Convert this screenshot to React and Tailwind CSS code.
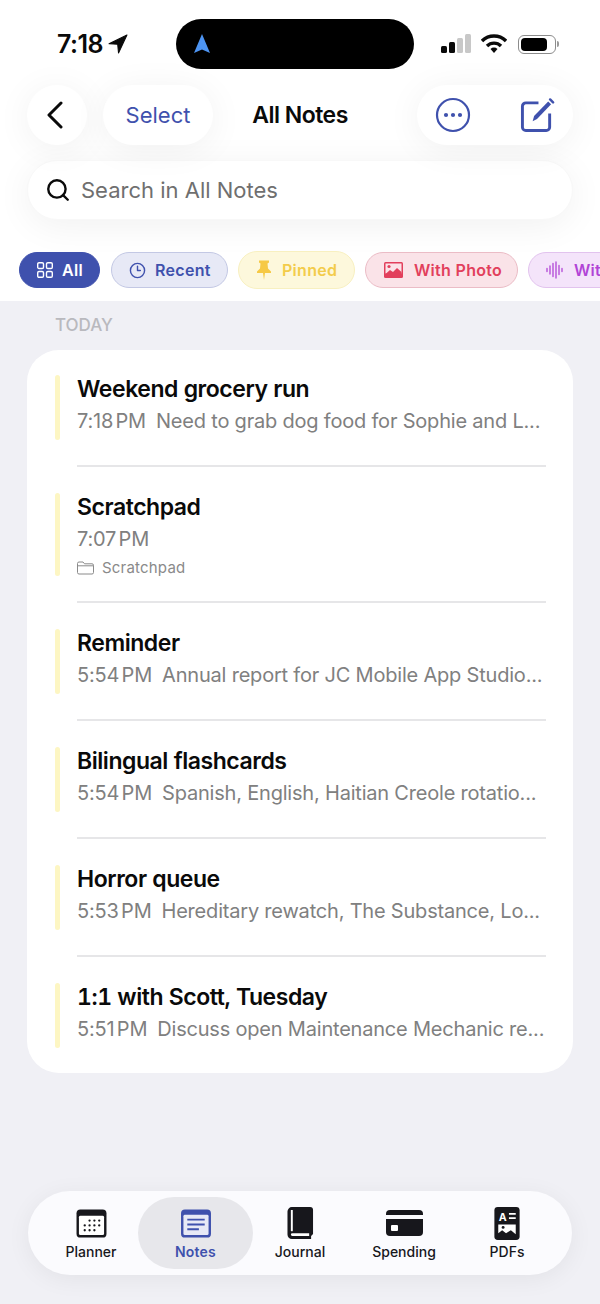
// App.jsx
import React from 'react';
import { Search, Clock3 } from 'lucide-react';

const INDIGO = '#3f51ad';

const notes = [
  { title: 'Weekend grocery run', time: '7:18 PM', text: 'Need to grab dog food for Sophie and L...' },
  { title: 'Scratchpad', time: '7:07 PM', folder: 'Scratchpad' },
  { title: 'Reminder', time: '5:54 PM', text: 'Annual report for JC Mobile App Studio...' },
  { title: 'Bilingual flashcards', time: '5:54 PM', text: 'Spanish, English, Haitian Creole rotatio...' },
  { title: 'Horror queue', time: '5:53 PM', text: 'Hereditary rewatch, The Substance, Lo...' },
  { title: '1:1 with Scott, Tuesday', time: '5:51 PM', text: 'Discuss open Maintenance Mechanic re...' },
];

const StatusBar = () => (
  <div className="flex items-center h-[50px] mt-[19px] pl-[57px] pr-[41px]">
    <div className="flex items-center w-[119px]">
      <span className="text-[25px] font-semibold text-[#0a0a0a] tracking-[-0.5px] leading-none">7:18</span>
      <svg width="20" height="20" viewBox="0 0 19 19" className="ml-[5px]">
        <path d="M18 1 L1 9.2 L9.2 9.8 L10 18 Z" fill="#0a0a0a" stroke="#0a0a0a" strokeLinejoin="round" />
      </svg>
    </div>
    <div className="w-[238px] h-[50px] bg-black rounded-[25px] flex items-center pl-[16px]">
      <svg width="20" height="22" viewBox="0 0 20 22">
        <path d="M10 1 L18 20 L10 16.5 L2 20 Z" fill="#4d94f2" strokeLinejoin="round" />
      </svg>
    </div>
    <div className="flex items-center flex-1 justify-end">
      <svg width="30" height="20" viewBox="0 0 30 20">
        <rect x="0" y="12" width="6" height="7" rx="1.5" fill="#0a0a0a" />
        <rect x="8" y="8" width="6" height="11" rx="1.5" fill="#0a0a0a" />
        <rect x="16" y="4" width="6" height="15" rx="1.5" fill="#c8c8c8" />
        <rect x="24" y="0" width="6" height="19" rx="1.5" fill="#c8c8c8" />
      </svg>
      <svg width="26" height="20" viewBox="0 0 26 20" className="ml-[10px]">
        <path d="M1 7 A17 17 0 0 1 25 7" fill="none" stroke="#0a0a0a" strokeWidth="3.4" />
        <path d="M6 12 A10 10 0 0 1 20 12" fill="none" stroke="#0a0a0a" strokeWidth="3.4" />
        <path d="M9.5 15 A5 5 0 0 1 16.5 15 L13 19 Z" fill="#0a0a0a" />
      </svg>
      <div className="flex items-center ml-[11px]">
        <div className="w-[38px] h-[19px] rounded-[6px] border border-[#8c8c8c] p-[2px]">
          <div className="w-[26px] h-full bg-black rounded-[4px]" />
        </div>
        <div className="w-[2px] h-[6px] bg-[#9a9a9a] rounded-r-sm ml-[1px]" />
      </div>
    </div>
  </div>
);

const NavBar = () => (
  <div className="flex items-center mt-[16px] mx-[27px] h-[60px]">
    <button className="w-[60px] h-[60px] rounded-full bg-white shadow-[0_4px_36px_rgba(0,0,0,0.06)] flex items-center justify-center">
      <svg width="18" height="28" viewBox="0 0 18 28" fill="none" stroke="#0a0a0a" strokeWidth="3" strokeLinecap="round" strokeLinejoin="round" className="mr-[4px]">
        <path d="M15 2 L3 14 L15 26" />
      </svg>
    </button>
    <button className="ml-[16px] w-[110px] h-[60px] rounded-full bg-white shadow-[0_4px_36px_rgba(0,0,0,0.06)] text-[22px] text-[#3f51ad]">
      Select
    </button>
    <div className="flex-1 text-center text-[23px] font-semibold text-[#0a0a0a] tracking-[-0.5px] pr-[30px]">All Notes</div>
    <div className="w-[156px] h-[60px] rounded-full bg-white shadow-[0_4px_36px_rgba(0,0,0,0.06)] flex items-center pl-[18px] gap-[49px]">
      <svg width="36" height="36" viewBox="0 0 36 36">
        <circle cx="18" cy="18" r="16" fill="none" stroke={INDIGO} strokeWidth="2.2" />
        <circle cx="11" cy="18" r="2.1" fill={INDIGO} />
        <circle cx="18" cy="18" r="2.1" fill={INDIGO} />
        <circle cx="25" cy="18" r="2.1" fill={INDIGO} />
      </svg>
      <svg width="35" height="35" viewBox="0 0 36 36">
        <path d="M19 5 H6 A3.5 3.5 0 0 0 2.5 8.5 V30 A3.5 3.5 0 0 0 6 33.5 H27 A3.5 3.5 0 0 0 30.5 30 V16" fill="none" stroke={INDIGO} strokeWidth="3" />
        <path d="M13 24 L14.5 18.5 L29 3.5 L32 6.5 L17.5 21.5 Z" fill={INDIGO} />
        <path d="M31 1.5 L34 4.5" stroke={INDIGO} strokeWidth="2.5" strokeLinecap="round" />
      </svg>
    </div>
  </div>
);

const SearchBar = () => (
  <div className="mt-[15px] mx-[27px] h-[60px] rounded-[30px] bg-white border border-[#f8f8f8] shadow-[0_6px_36px_rgba(0,0,0,0.06)] flex items-center pl-[17px]">
    <Search size={26} strokeWidth={2.2} color="#0a0a0a" />
    <span className="ml-[10px] text-[22px] text-[#6f6f6f]">Search in All Notes</span>
  </div>
);

const GridIcon = () => (
  <svg width="16" height="16" viewBox="0 0 16 16" fill="none" stroke="white" strokeWidth="1.4">
    <rect x="0.7" y="0.7" width="5.8" height="5.8" rx="1.3" />
    <rect x="9.5" y="0.7" width="5.8" height="5.8" rx="1.3" />
    <rect x="0.7" y="9.5" width="5.8" height="5.8" rx="1.3" />
    <rect x="9.5" y="9.5" width="5.8" height="5.8" rx="1.3" />
  </svg>
);

const PinIcon = () => (
  <svg width="14" height="20" viewBox="0 0 14 20" fill="#f6c945">
    <path d="M2 0.5 H12 V2.5 L10.5 3.5 L11 8.5 L14 11.5 V13 H8 L7 20 L6 13 H0 V11.5 L3 8.5 L3.5 3.5 L2 2.5 Z" />
  </svg>
);

const PhotoIcon = () => (
  <svg width="19" height="16" viewBox="0 0 19 16">
    <rect x="0" y="0" width="19" height="16" rx="1.5" fill="#e23f5c" />
    <rect x="1.5" y="1.5" width="16" height="10" fill="#fbe3e8" />
    <circle cx="5" cy="4.5" r="1.6" fill="#e23f5c" />
    <path d="M1.5 12 L6 8 L9 10 L13 6 L17.5 10 V13 H1.5 Z" fill="#e23f5c" />
  </svg>
);

const WaveIcon = () => (
  <svg width="17" height="18" viewBox="0 0 17 18" stroke="#b144d6" strokeWidth="1.3" strokeLinecap="round">
    <path d="M1 7.5 V10.5 M4 5 V13 M7 2.5 V15.5 M10 1 V17 M13 4.5 V13.5 M16 7.5 V10.5" />
  </svg>
);

const Chip = ({ icon, label, className, textClass, gap = 'gap-[9px]' }) => (
  <div className={`shrink-0 rounded-full border flex items-center ${gap} text-[16px] font-semibold tracking-[0.3px] ${className} ${textClass}`}>
    {icon}
    <span>{label}</span>
  </div>
);

const FilterChips = () => (
  <div className="mt-[31px] pl-[19px] flex items-center gap-[10px] overflow-hidden h-[38px]">
    <Chip
      icon={<GridIcon />}
      label="All"
      className="w-[81px] mr-[1px] h-[36px] pl-[17px] bg-[#3f51ad] border-[#3f51ad]"
      textClass="text-white"
    />
    <Chip
      icon={<Clock3 size={17} strokeWidth={2} />}
      label="Recent"
      className="w-[117px] h-[36px] pl-[17px] bg-[#e7e9f6] border-[#c3c8e4]"
      textClass="text-[#3f51ad]"
    />
    <Chip
      icon={<PinIcon />}
      label="Pinned"
      className="w-[117px] h-[38px] pl-[18px] bg-[#fdf8dc] border-[#f8f0c0]"
      textClass="text-[#f3cc4b]"
      gap="gap-[11px]"
    />
    <Chip
      icon={<PhotoIcon />}
      label="With Photo"
      className="w-[153px] h-[36px] pl-[18px] bg-[#fae3e8] border-[#ebbcc6]"
      textClass="text-[#e23f5c]"
      gap="gap-[11px]"
    />
    <Chip
      icon={<WaveIcon />}
      label="With Audio"
      className="w-[150px] h-[36px] pl-[17px] bg-[#f4e4fa] border-[#e2c3ee]"
      textClass="text-[#b144d6]"
      gap="gap-[11px]"
    />
  </div>
);

const FolderIcon = () => (
  <svg width="17" height="14" viewBox="0 0 17 14" fill="none" stroke="#8a8a8a" strokeWidth="1">
    <path d="M0.5 2.5 A1.5 1.5 0 0 1 2 1 H6 L7.5 2.8 H15 A1.5 1.5 0 0 1 16.5 4.3 V11.5 A1.5 1.5 0 0 1 15 13 H2 A1.5 1.5 0 0 1 0.5 11.5 Z" />
    <path d="M0.5 4.8 H16.5" />
  </svg>
);

const NoteRow = ({ note, isFirst, isLast }) => (
  <div className={`pl-[28px] pr-[27px] ${isFirst ? 'pt-[25px]' : 'pt-[26px]'} ${isLast ? 'pb-[25px]' : ''}`}>
    <div className="flex">
      <div className="w-[5px] bg-[#fdf6c3] rounded-full" />
      <div className={`ml-[17px] flex-1 min-w-0 ${note.folder ? 'mb-[-3px]' : 'pb-[4px]'}`}>
        <div className="text-[23px] leading-[29px] font-semibold text-[#0a0a0a] tracking-[-0.45px] tabular-nums">{note.title}</div>
        <div className="mt-[2px] text-[20px] leading-[30px] text-[#808080] whitespace-nowrap overflow-hidden">
          <span className="tracking-[-0.2px] [word-spacing:-3px]">{note.time}</span>
          {note.text && <span className="ml-[10px] tracking-[-0.2px]">{note.text}</span>}
        </div>
        {note.folder && (
          <div className="mt-[3px] flex items-center gap-[8px] h-[22px] text-[15px] text-[#8a8a8a]">
            <FolderIcon />
            <span className="tracking-[0.2px]">{note.folder}</span>
          </div>
        )}
      </div>
    </div>
    {!isLast && <div className="ml-[22px] mt-[25px] h-[2px] bg-[#e6e6e8]" />}
  </div>
);

const PlannerIcon = () => (
  <svg width="31" height="29" viewBox="0 0 32 30">
    <rect x="0.5" y="0.5" width="31" height="29" rx="4" fill="#17171c" />
    <rect x="3" y="7" width="26" height="20" rx="1.5" fill="white" />
    <g fill="#17171c">
      <circle cx="14" cy="12" r="1.2" /><circle cx="19" cy="12" r="1.2" /><circle cx="24" cy="12" r="1.2" />
      <circle cx="9" cy="17" r="1.2" /><circle cx="14" cy="17" r="1.2" /><circle cx="19" cy="17" r="1.2" /><circle cx="24" cy="17" r="1.2" />
      <circle cx="9" cy="22" r="1.2" /><circle cx="14" cy="22" r="1.2" /><circle cx="19" cy="22" r="1.2" />
    </g>
  </svg>
);

const NotesIcon = () => (
  <svg width="32" height="29" viewBox="0 0 32 30">
    <rect x="0.5" y="0.5" width="31" height="29" rx="4" fill={INDIGO} />
    <rect x="3" y="6" width="26" height="21" rx="1.5" fill="#e7e9f6" />
    <path d="M7 11 H25 M7 16 H25 M7 21 H19" stroke={INDIGO} strokeWidth="2" />
  </svg>
);

const JournalIcon = () => (
  <svg width="27" height="33" viewBox="0 0 28 34">
    <path d="M5 0 H24 A3 3 0 0 1 27 3 V28 L25 30 V33 H5 A4.5 4.5 0 0 1 0.5 28.5 V4.5 A4.5 4.5 0 0 1 5 0 Z" fill="#17171c" />
    <path d="M4 3 H6 V25 H4 Z" fill="white" />
    <path d="M4 28.5 A1.5 1.5 0 0 1 5.5 27 H23 V30 H5.5 A1.5 1.5 0 0 1 4 28.5 Z" fill="white" />
  </svg>
);

const SpendingIcon = () => (
  <svg width="37" height="28" viewBox="0 0 37 28">
    <path d="M0 5 A4 4 0 0 1 4 1 H33 A4 4 0 0 1 37 5 V6 H0 Z" fill="#17171c" />
    <path d="M0 10 H37 V23 A4 4 0 0 1 33 27 H4 A4 4 0 0 1 0 23 Z" fill="#17171c" />
    <rect x="5" y="16" width="7" height="6" rx="1" fill="white" />
  </svg>
);

const PdfIcon = () => (
  <svg width="26" height="33" viewBox="0 0 26 34">
    <rect x="0" y="0" width="26" height="34" rx="3.5" fill="#17171c" />
    <text x="4.5" y="14.5" fontSize="11" fontWeight="700" fill="white" fontFamily="Inter, sans-serif">A</text>
    <path d="M15 7 H22 M15 11.5 H22" stroke="white" strokeWidth="1.8" />
    <path d="M4 18 H22 V28 L17 24 L12 27 L8 24 L4 27 Z" fill="white" />
    <circle cx="9" cy="21" r="1.5" fill="#17171c" />
  </svg>
);

const tabs = [
  { label: 'Planner', icon: <PlannerIcon />, width: 'w-[110px] pl-[16px]' },
  { label: 'Notes', icon: <NotesIcon />, width: 'w-[115px]', active: true },
  { label: 'Journal', icon: <JournalIcon />, width: 'w-[94px]' },
  { label: 'Spending', icon: <SpendingIcon />, width: 'w-[114px]' },
  { label: 'PDFs', icon: <PdfIcon />, width: 'w-[92px]' },
];

const TabBar = () => (
  <div className="mx-[28px] mb-[29px] h-[84px] rounded-[42px] bg-[#fbfbfe] shadow-[0_4px_24px_rgba(0,0,0,0.06)] flex items-center">
    {tabs.map((tab) => (
      <div
        key={tab.label}
        className={`${tab.width} h-[72px] rounded-[36px] flex flex-col items-center ${tab.active ? 'bg-[#e7e7eb]' : ''}`}
      >
        <div className="h-[36px] mt-[8px] flex items-center justify-center">{tab.icon}</div>
        <span className={`mt-[2px] text-[14px] leading-[18px] ${tab.active ? 'text-[#3f51ad] font-semibold tracking-[0.2px]' : 'text-[#17171c] font-medium'}`}>
          {tab.label}
        </span>
      </div>
    ))}
  </div>
);

export default function App() {
  return (
    <div className="w-[600px] h-[1304px] bg-[#f0f0f5] flex flex-col overflow-hidden font-['Inter',sans-serif]">
      <div className="bg-white h-[301px] shrink-0 overflow-hidden">
        <StatusBar />
        <NavBar />
        <SearchBar />
        <FilterChips />
      </div>

      <div className="flex-1 px-[27px]">
        <div className="mt-[15px] pl-[28px] text-[17px] leading-[18px] font-medium text-[#b9b9be]">TODAY</div>
        <div className="mt-[16px] bg-white rounded-[32px]">
          {notes.map((note, i) => (
            <NoteRow key={note.title} note={note} isFirst={i === 0} isLast={i === notes.length - 1} />
          ))}
        </div>
      </div>

      <TabBar />
    </div>
  );
}
